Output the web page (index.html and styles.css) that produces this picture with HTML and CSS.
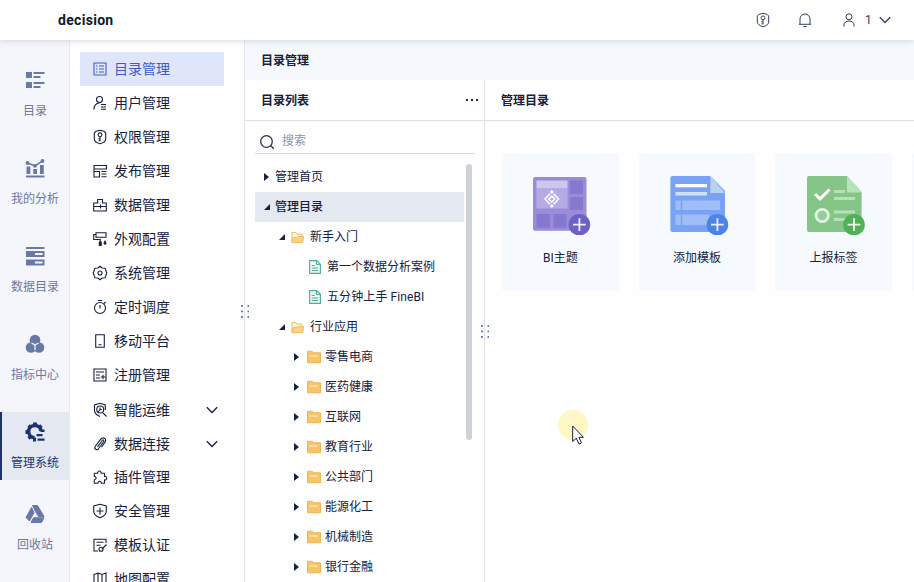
FILE: index.html
```html
<!DOCTYPE html>
<html lang="zh-CN">
<head>
<meta charset="utf-8">
<title>decision</title>
<link rel="stylesheet" href="styles.css">
</head>
<body>
<svg class="defs" width="0" height="0">
  <symbol id="shield-key" viewBox="0 0 16 16"><path d="M8 1.300 12 2.300 13.700 4v6c0 2-2.500 3.900-5.700 4.800-3.200-.9-5.700-2.800-5.700-4.800V4L4 2.300z"/><circle cx="8" cy="5.800" r="1.900"/><path d="M8 7.700v4.600M8 9.800H6.300M8 11.800H6.500"/></symbol>
  <symbol id="chev" viewBox="0 0 12 8"><path d="M.8 1.200 6 6.500l5.200-5.300"/></symbol>
  <symbol id="folder" viewBox="0 0 14 14"><path d="M.5 12.700V1.300h4.700l1.300 1.500h7v9.900z" fill="#f8c468" stroke="#eeb456"/><path d="M2.500 6h8" stroke="#fff0c4" stroke-width="1.200"/></symbol>
  <symbol id="folder-open" viewBox="0 0 14 14"><path d="M1 12V1.700h4l1.300 1.600h5.200V6" fill="#fff6dc" stroke="#efb550"/><path d="M1 12.500 2.300 7.200 6.500 7l1-1h6l-1 6.500z" fill="#f9d48c" stroke="#efb550"/></symbol>
  <symbol id="doc" viewBox="0 0 12 14"><path d="M.6.600h7.100l3.700 3.700v9.100H.6z" fill="#effaf7" stroke="#4fac98" stroke-width="1.100"/><path d="M7.500.600v4h4M2.700 5.500h3M2.700 8h6.500M2.700 10.500h6.500" fill="none" stroke="#4fac98"/></symbol>
</svg>

<header class="topbar">
  <h1 class="brand">decision</h1>
  <div class="tools">
    <svg class="ic"><use href="#shield-key"/></svg>
    <svg class="ic" viewBox="0 0 16 16"><path d="M3 12V7a5 5 0 0 1 10 0v5M1.800 12.300h12.400M6.300 14.500h3.400"/></svg>
    <div class="user">
      <svg class="ic" viewBox="0 0 16 16"><circle cx="8" cy="4.800" r="3"/><path d="M3 14.500V13c0-2.500 2-4 5-4s5 1.500 5 4v1.500"/></svg>
      <span>1</span>
      <svg class="chev"><use href="#chev"/></svg>
    </div>
  </div>
</header>

<div class="shell">
  <nav class="rail">
    <a class="rail-item"><svg viewBox="0 0 20 20"><path d="M1 2h6v6H1zM1 12h6v6H1zM8.500 2h11v2h-11zM8.500 6h7v2h-7zM8.500 12h11v2h-11zM8.500 16h7v2h-7z"/></svg>目录</a>
    <a class="rail-item"><svg viewBox="0 0 20 20"><path d="M1 17.500h18.500v2H1zM1.500 8.500h3.800v7.500H1.500zM8.300 11H12v5H8.300zM15 7h3.800v9H15z"/><path d="m2.500 5 7.500 2.800L17.500 3" fill="none" stroke="currentColor" stroke-width="1.500"/><circle cx="2.500" cy="5" r="1.900"/><circle cx="10" cy="7.800" r="1.900"/><circle cx="17.500" cy="3" r="1.900"/></svg>我的分析</a>
    <a class="rail-item"><svg viewBox="0 0 20 20"><path fill-rule="evenodd" d="M1 1h18.500v2H1zM1 5h18.500v6H1zM10 7v2h7.500V7zM1 13.500h18.500v6H1zM10 15.500v2h7.500v-2z"/></svg>数据目录</a>
    <a class="rail-item"><svg viewBox="0 0 20 20"><circle cx="10" cy="6" r="5.300"/><circle cx="6" cy="13.500" r="5.300"/><circle cx="14" cy="13.500" r="5.300"/><path d="M10 7v8"  stroke="currentColor" stroke-width="4"/><path d="M10 16v-5L6.500 9M10 11 13.500 9" fill="none" stroke="#f5f6fc" stroke-width="1.300"/></svg>指标中心</a>
    <a class="rail-item on"><svg viewBox="0 0 20 20"><path d="M16 9A6.200 6.200 0 1 0 9.500 15.800" fill="none" stroke="currentColor" stroke-width="3.500"/><path d="M8 .5h4v3H8zM8 15.500h3v4H8zM.5 8h3v4h-3zM15.500 7.500h4V10h-4zM2.300 4.800l2.500-2.500 2.300 2.300-2.500 2.500zM15.200 2.300l2.500 2.500-2.300 2.300-2.500-2.500zM4.800 17.700l-2.500-2.500 2.300-2.300 2.500 2.500zM11.500 12h6v2.200h-6zM12.500 16.500h7v2.300h-7z"/></svg>管理系统</a>
    <a class="rail-item"><svg viewBox="0 0 20 20"><path d="M7.500 1.500h5l6.500 11h-5.500L10 6.500zM6.500 3.500 9 8.500 4.500 17 1 13.500zM8.500 13.800H19l-2.500 4.700H6z" stroke="currentColor" stroke-linejoin="round"/></svg>回收站</a>
  </nav>

  <nav class="menu">
    <a class="menu-item on"><svg class="ic" viewBox="0 0 16 16"><path d="M2 2h12v12H2zM4 5h1.500M7 5h5M4 8h1.500M7 8h5M4 11h1.500M7 11h5"/></svg>目录管理</a>
    <a class="menu-item"><svg class="ic" viewBox="0 0 16 16"><circle cx="7.500" cy="4.500" r="3"/><path d="M2 14.500c0-4 2-6.300 5.500-6.500M9 9.500h5M9 12h5M9 14.300h5"/></svg>用户管理</a>
    <a class="menu-item"><svg class="ic"><use href="#shield-key"/></svg>权限管理</a>
    <a class="menu-item"><svg class="ic" viewBox="0 0 16 16"><path d="M2 2.500h12.500V6H2zM2 8.500h5.500V14H2zM2 6v3M9.500 8.500h5M9.500 11h5M9.500 13.700h5"/></svg>发布管理</a>
    <a class="menu-item"><svg class="ic" viewBox="0 0 16 16"><path d="M1.700 6h4V2.500h4.800V6h3.800v8H1.700zM1.700 9.500H14.300M8.500 7.500v4"/></svg>数据管理</a>
    <a class="menu-item"><svg class="ic" viewBox="0 0 16 16"><path d="M4 1.800h10v4.500H4zM4 3.500H1.700v5h6.500V11"/><path d="M6.800 10.500h3v4.500h-3zM13 9l1.300 2.500a1.500 1.500 0 1 1-2.600 0z" fill="currentColor" stroke="none"/></svg>外观配置</a>
    <a class="menu-item"><svg class="ic" viewBox="0 0 16 16"><path d="m8 1.200 2.200 1.800 3 .2.700 2.600L14.800 8l-.9 2.200-.7 2.600-3 .2L8 14.800 5.800 13l-3-.2-.7-2.600L1.200 8l.9-2.200.7-2.600 3-.2z" stroke-linejoin="round"/><circle cx="8" cy="8" r="2"/></svg>系统管理</a>
    <a class="menu-item"><svg class="ic" viewBox="0 0 16 16"><circle cx="8" cy="9" r="5.500"/><path d="M5.800 1.500h4.400M8 6v3.500M12 4.500l1.700-1.700"/></svg>定时调度</a>
    <a class="menu-item"><svg class="ic" viewBox="0 0 16 16"><path d="M3.700 1.700h8.600v12.600H3.700zM6.500 11.800h3"/></svg>移动平台</a>
    <a class="menu-item"><svg class="ic" viewBox="0 0 16 16"><path d="M2 2h12v12H2zM4 5h8M4 8h4M4 11h4M11 7.700v4.600M8.700 10h4.600"/></svg>注册管理</a>
    <a class="menu-item low"><svg class="ic" viewBox="0 0 16 16"><path d="M8 14.500C4.500 13 2.500 11.500 2.500 8.500V3L8 1.300 13.300 3v5M11 10.800l3.500 3.700"/><circle cx="8.200" cy="7.500" r="3.500"/><path d="m5.500 10.300 3-3M8 5.500v2h2"/></svg>智能运维<svg class="chev"><use href="#chev"/></svg></a>
    <a class="menu-item low"><svg class="ic" viewBox="0 0 16 16"><path d="m5.500 10.800 4.700-6.300c.9-1.200 2.300-.2 1.500 1l-5.200 7.300c-1.500 2-4.800.2-3.300-2.300l5.300-7.200c2.200-3 6.700-.7 4.700 2.600L9.500 11.300"/></svg>数据连接<svg class="chev"><use href="#chev"/></svg></a>
    <a class="menu-item"><svg class="ic" viewBox="0 0 16 16"><path d="M2.300 4.200h3.500c-.8-3 4-3 3.200 0h3.500v3.300c3-.8 3 4.200 0 3.400v3.300H9.300c.2-2.500-3.600-2.500-3.400 0H2.300v-3.500c2.500 0 2.500-3.200 0-3.200z" stroke-linejoin="round"/></svg>插件管理</a>
    <a class="menu-item"><svg class="ic" viewBox="0 0 16 16"><path d="M8 1.200 14.300 3v5.200c0 3.300-2.800 5.300-6.300 6.600-3.500-1.300-6.300-3.300-6.300-6.600V3zM8 4.500v7M4.500 8h7"/></svg>安全管理</a>
    <a class="menu-item"><svg class="ic" viewBox="0 0 16 16"><path d="M6 14H2V2.300h12V6M4.500 5.300h7M4.500 8.300h4M10 12l4.500-4.500"/><circle cx="9" cy="12.300" r="2"/></svg>模板认证</a>
    <a class="menu-item"><svg class="ic" viewBox="0 0 16 16"><path d="M2 3.500 6 2l4 1.500L14 2v11l-4 1.500L6 13l-4 1.500zM6 2v11M10 3.500v11"/></svg>地图配置</a>
  </nav>

  <main class="main">
    <i class="grip"></i>
    <h2 class="page-title">目录管理</h2>
    <div class="split">
      <section class="tree-pane">
        <i class="grip right"></i>
        <div class="pane-head">目录列表<span class="more"><i></i><i></i><i></i></span></div>
        <div class="search"><svg viewBox="0 0 16 16"><circle cx="7.500" cy="7.500" r="5.800"/><path d="m11.800 11.800 3 3"/></svg>搜索</div>
        <div class="tree-wrap">
          <ul class="tree">
            <li class="lv0"><b class="tri"></b>管理首页</li>
            <li class="lv0 on"><b class="tri open"></b>管理目录</li>
            <li class="lv1"><b class="tri open"></b><svg class="fo"><use href="#folder-open"/></svg>新手入门</li>
            <li class="leaf"><svg class="fd"><use href="#doc"/></svg>第一个数据分析案例</li>
            <li class="leaf latin"><svg class="fd"><use href="#doc"/></svg>五分钟上手 FineBI</li>
            <li class="lv1"><b class="tri open"></b><svg class="fo"><use href="#folder-open"/></svg>行业应用</li>
            <li class="lv2"><b class="tri"></b><svg class="fo"><use href="#folder"/></svg>零售电商</li>
            <li class="lv2"><b class="tri"></b><svg class="fo"><use href="#folder"/></svg>医药健康</li>
            <li class="lv2"><b class="tri"></b><svg class="fo"><use href="#folder"/></svg>互联网</li>
            <li class="lv2"><b class="tri"></b><svg class="fo"><use href="#folder"/></svg>教育行业</li>
            <li class="lv2"><b class="tri"></b><svg class="fo"><use href="#folder"/></svg>公共部门</li>
            <li class="lv2"><b class="tri"></b><svg class="fo"><use href="#folder"/></svg>能源化工</li>
            <li class="lv2"><b class="tri"></b><svg class="fo"><use href="#folder"/></svg>机械制造</li>
            <li class="lv2"><b class="tri"></b><svg class="fo"><use href="#folder"/></svg>银行金融</li>
          </ul>
          <div class="thumb"></div>
        </div>
      </section>
      <section class="content">
        <div class="pane-head">管理目录</div>
        <div class="cards">
          <article class="card">
            <svg viewBox="0 0 64 64"><rect x="5" y="6" width="53.500" height="53.700" rx="2" fill="#9b8bd8"/><path d="M8.500 17h31v20.500h-31z" fill="#b4abe6"/><path d="M8.500 9.500h31V17h-31z" fill="#cbc8eb"/><path d="M42 9.500h13v13.500H42zM42 26h13v13H42zM8.500 43h13.500v13.500H8.500zM25.500 43h13v13.500h-13z" fill="#8478cf"/><path d="m22 22.800-5 5.200 5 5.200M25.600 22.800l5 5.200-5 5.200M20.800 28l3-3 3 3-3 3z" fill="none" stroke="#fff" stroke-width="1.500"/><path d="m23.800 19 2 2-2 2-2-2zM23.800 33l2 2-2 2-2-2z" fill="#fff"/><circle cx="51.400" cy="53.700" r="10.800" fill="#6b62c1"/><path d="M45 53.700h12.800M51.400 47.300v12.800" stroke="#f1edff" stroke-width="1.800"/></svg>
            BI主题
          </article>
          <article class="card">
            <svg viewBox="0 0 64 64"><path d="M7.400 5h38L60 20v41H7.400a2 2 0 0 1-2-2V7a2 2 0 0 1 2-2z" fill="#78a2f3"/><path d="M45.400 5v17H60z" fill="#b9d2ef"/><path d="M10.500 13H42v3.300H10.500z" fill="#fff"/><path d="M10.500 21H42v3.500H10.500z" fill="#cfe0fb"/><path d="M10.500 29.500H55V39H10.500zM10.500 43.500H44V54H10.500z" fill="#9fbdf7"/><path d="M16.500 29v10M16.500 43v11" stroke="#78a2f3" stroke-width="1.500"/><circle cx="52.400" cy="53.700" r="10.800" fill="#4d82e6"/><path d="M46 53.700h12.800M52.400 47.300v12.800" stroke="#e4f1ff" stroke-width="1.800"/></svg>
            添加模板
          </article>
          <article class="card">
            <svg viewBox="0 0 64 64"><path d="M8 5h38L60.600 21v40H8a2 2 0 0 1-2-2V7a2 2 0 0 1 2-2z" fill="#85c587"/><path d="M46 5v16.500h14.600z" fill="#b8e2ba"/><path d="m14 23 5 5 9.500-9.500" fill="none" stroke="#fff" stroke-width="3"/><circle cx="21.200" cy="44.500" r="6.200" fill="#9acb9c" stroke="#e0f5e1" stroke-width="2.800"/><path d="M33 20.500h11M33 27.500h21M33 41h21M33 48.500h12" stroke="#b9e1b8" stroke-width="3"/><circle cx="53" cy="53.700" r="10.800" fill="#50b158"/><path d="M46.600 53.700h12.800M53 47.300v12.800" stroke="#effff0" stroke-width="1.800"/></svg>
            上报标签
          </article>
          <article class="card"></article>
        </div>
      </section>
    </div>
  </main>
</div>

<div class="pointer"><svg viewBox="0 0 12 20"><path d="M.7 1v15.500l3.600-3.400 2.700 6 2.500-1.200-2.600-5.600h4.500z" fill="#fff" stroke="#1c1c2c"/></svg></div>
</body>
</html>
```
FILE: styles.css
```css
* { box-sizing: border-box; }
body {
  margin: 0;
  height: 582px;
  overflow: hidden;
  display: flex;
  flex-direction: column;
  background: #fefefe;
  color: #14213f;
  font: 12px/18px Roboto, "Noto Sans CJK SC", sans-serif;
}
.defs { position: absolute; }
h1, h2, ul { margin: 0; padding: 0; list-style: none; }
svg { flex: none; fill: none; stroke: currentColor; }

.topbar {
  flex: none;
  height: 40px;
  display: flex;
  align-items: center;
  justify-content: space-between;
  padding: 0 23px 0 58px;
  background: #fefefe;
  box-shadow: 0 1px 6px rgba(40, 40, 70, .16);
  z-index: 1;
}
.brand { font: bold 14px/20px Roboto, sans-serif; letter-spacing: .3px; color: #10182e; }
.tools { display: flex; align-items: center; gap: 26px; color: #33405f; }
.user { display: flex; align-items: center; margin-left: 2px; }
.user span { width: 6px; margin: 0 8px; }
.ic { width: 16px; height: 16px; }
.chev { width: 12px; height: 8px; stroke-width: 1.3; }

.shell { flex: 1; min-height: 0; display: flex; }

.rail {
  flex: none;
  width: 70px;
  padding-top: 20px;
  border-right: 1px solid #e9eaf1;
  background: #f5f6fc;
  color: #6a78a6;
}
.rail-item {
  height: 68px;
  margin-bottom: 20px;
  padding: 10px 0 0 1px;
  display: flex;
  flex-direction: column;
  align-items: center;
  gap: 12px;
}
.rail-item svg { width: 20px; height: 20px; fill: currentColor; stroke: none; }
.rail-item.on {
  margin-bottom: 14px;
  background: #e4e8f1;
  box-shadow: inset 2px 0 #1a3274;
  color: #1a3274;
}

.menu {
  flex: none;
  width: 174px;
  padding: 12px 20px 0 10px;
  overflow: hidden;
  font-size: 14px;
}
.menu-item { display: flex; align-items: center; height: 34px; padding: 0 6px 0 12px; }
.menu-item.low { padding-top: 1px; }
.menu-item .ic { margin-right: 6px; stroke-width: 1.1; }
.menu-item .chev { margin-left: auto; }
.menu-item.on { background: #dfe6fa; color: #3c5bc6; }

.main {
  position: relative;
  flex: 1;
  min-width: 0;
  display: flex;
  flex-direction: column;
  border-left: 1px solid #e5e6eb;
}
.page-title {
  flex: none;
  height: 40px;
  padding-left: 16px;
  background: #f5f9fd;
  font-size: 12px;
  line-height: 43px;
}
.split { flex: 1; min-height: 0; display: flex; }
.tree-pane {
  position: relative;
  flex: none;
  width: 240px;
  border-right: 1px solid #dcdde3;
  display: flex;
  flex-direction: column;
}
.pane-head {
  flex: none;
  height: 41px;
  display: flex;
  align-items: center;
  justify-content: space-between;
  padding: 1px 6px 0 16px;
  border-bottom: 1px solid #dfdfe5;
  font-weight: bold;
}
.more { display: flex; gap: 3px; margin-top: -1px; }
.more i { width: 2px; height: 2px; background: #1c2745; }
.search {
  flex: none;
  height: 33px;
  margin: 0 9px 0 10px;
  padding: 7px 0 0 4px;
  display: flex;
  align-items: center;
  gap: 7px;
  border-bottom: 1px solid #dcdbe3;
  color: #8c94ac;
}
.search svg { width: 16px; height: 16px; color: #25304c; stroke-width: 1.3; margin-top: 2px; }
.tree-wrap { flex: 1; min-height: 0; display: flex; padding: 8px 0 0 10px; overflow: hidden; }
.tree { width: 209px; }
.tree li { height: 30px; display: flex; align-items: center; white-space: nowrap; }
.lv0 { padding-left: 9px; }
.tree .on { background: #e4e8f0; font-weight: 500; }
.lv1 { padding-left: 24px; }
.lv2 { padding-left: 39px; }
.leaf { padding-left: 54px; }
.latin { letter-spacing: .1px; }
.tri {
  width: 5px;
  height: 8px;
  margin-right: 6px;
  background: #14213f;
  clip-path: polygon(0 0, 100% 50%, 0 100%);
}
.tri.open { width: 6px; height: 6px; margin-right: 5px; clip-path: polygon(100% 0, 100% 100%, 0 100%); }
.lv1 .tri.open { margin-right: 6px; }
.lv2 .tri { margin-right: 8px; }
.fo { width: 14px; height: 14px; margin-right: 4px; }
.lv1 .fo { width: 13px; height: 13px; margin-right: 6px; }
.fd { width: 12px; height: 14px; margin-right: 6px; }
.thumb { width: 6px; height: 276px; margin: 2px 0 0 2px; border-radius: 3px; background: #cfd1d8; }

.content { flex: 1; min-width: 0; overflow: hidden; }
.cards { display: flex; gap: 20px; padding: 32px 0 0 17px; }
.card {
  flex: none;
  width: 116.600px;
  height: 138px;
  padding-top: 18px;
  display: flex;
  flex-direction: column;
  align-items: center;
  gap: 14px;
  border-radius: 3px;
  background: #f6f9fd;
}
.card svg { width: 64px; height: 64px; stroke: none; }

.grip {
  position: absolute;
  z-index: 2;
  left: -4px;
  top: 265px;
  width: 8px;
  height: 13px;
  background: radial-gradient(circle at 1px 1px, #6274a8 1px, transparent 1.300px) 0 0 / 6.500px 5.500px;
}
.grip.right { left: auto; right: -5px; top: 245px; }

.pointer {
  position: absolute;
  z-index: 3;
  left: 558px;
  top: 410px;
  width: 30px;
  height: 30px;
  border-radius: 50%;
  background: #fff8c4;
}
.pointer svg { position: absolute; left: 14px; top: 15px; width: 12px; height: 20px; }
```
